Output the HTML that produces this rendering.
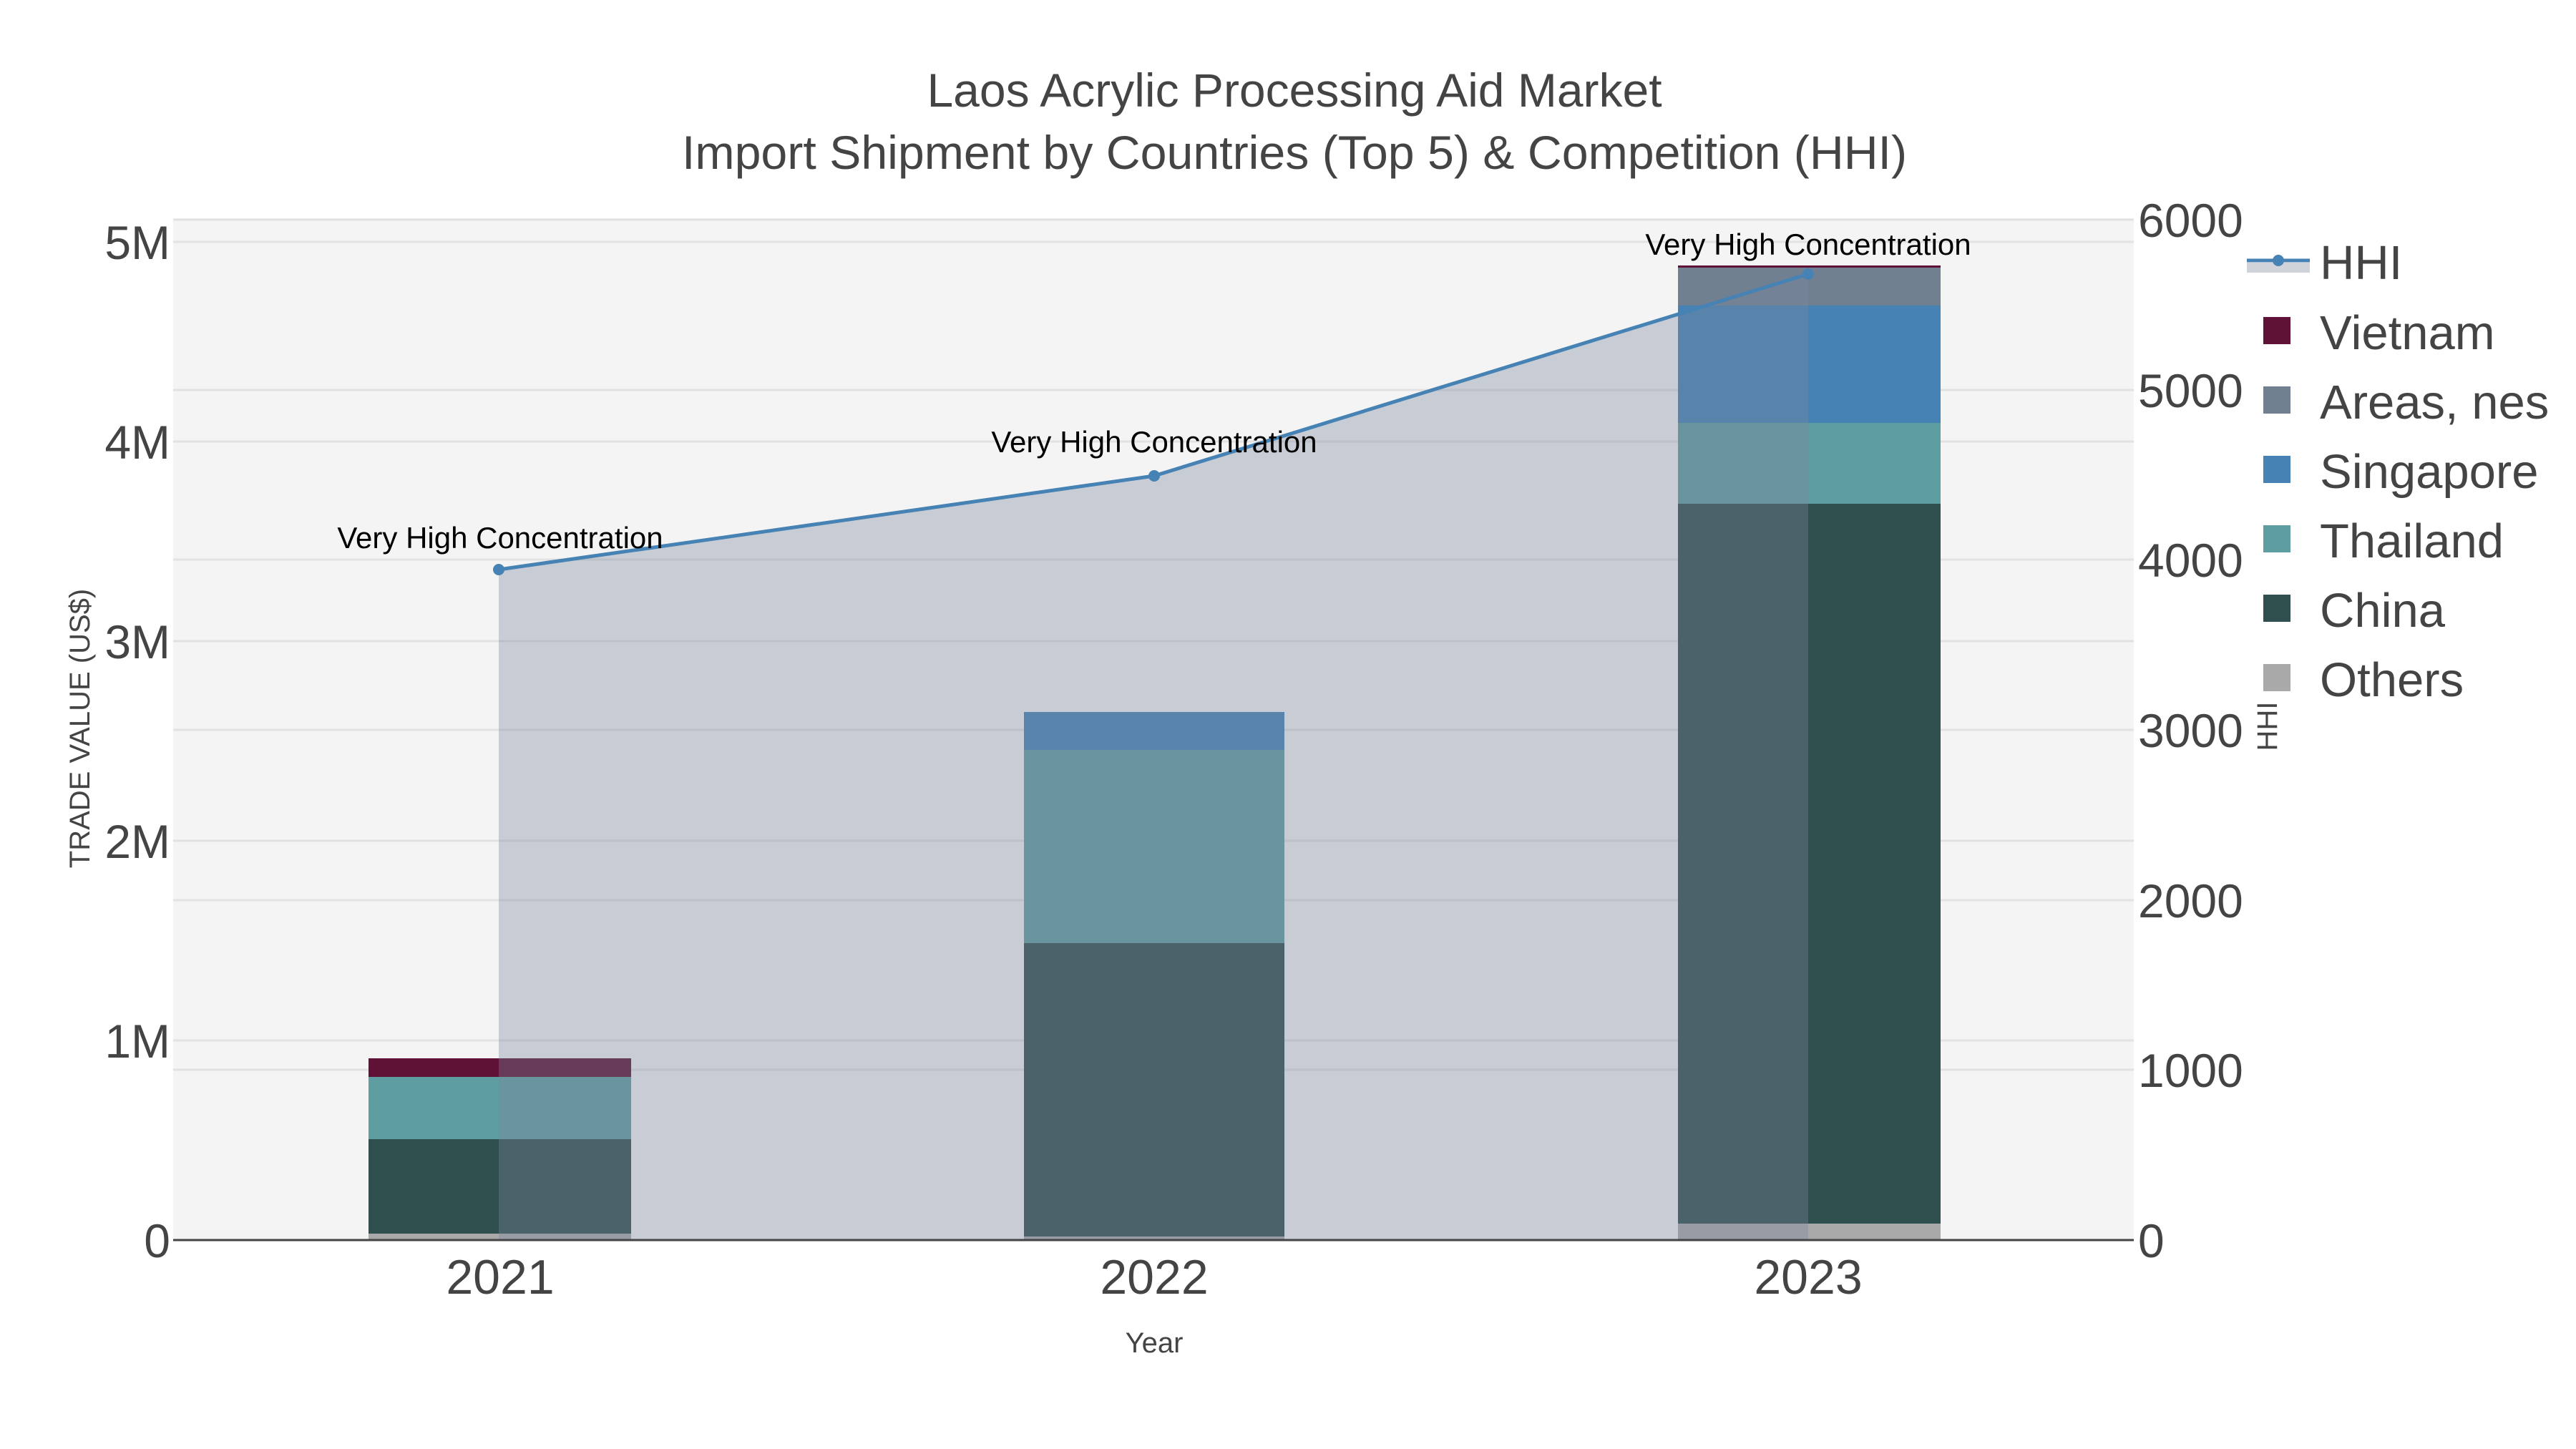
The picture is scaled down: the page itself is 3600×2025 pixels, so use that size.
<!DOCTYPE html>
<html><head><meta charset="utf-8"><style>html,body{margin:0;padding:0;background:#fff}svg{display:block}</style></head>
<body>
<svg width="3600" height="2025" viewBox="0 0 3600 2025" xmlns="http://www.w3.org/2000/svg" font-family="'Liberation Sans', Arial, sans-serif">
<rect width="3600" height="2025" fill="#fff"/>
<rect x="242" y="305" width="2740" height="1428" fill="#f4f4f4"/>
<g stroke="#e2e2e2" stroke-width="3">
<line x1="242" x2="2982" y1="1454" y2="1454"/><line x1="242" x2="2982" y1="1175" y2="1175"/><line x1="242" x2="2982" y1="896" y2="896"/><line x1="242" x2="2982" y1="617" y2="617"/><line x1="242" x2="2982" y1="338" y2="338"/>
<line x1="242" x2="2982" y1="1495" y2="1495"/><line x1="242" x2="2982" y1="1258" y2="1258"/><line x1="242" x2="2982" y1="1020" y2="1020"/><line x1="242" x2="2982" y1="782" y2="782"/><line x1="242" x2="2982" y1="545" y2="545"/><line x1="242" x2="2982" y1="307" y2="307"/>
</g>
<rect x="515" y="1479" width="367" height="26" fill="#5f1235"/>
<rect x="515" y="1505" width="367" height="87" fill="#5f9ea0"/>
<rect x="515" y="1592" width="367" height="132" fill="#2f4f4f"/>
<rect x="515" y="1724" width="367" height="9" fill="#a9a9a9"/>
<rect x="1431" y="995" width="364" height="53" fill="#4682b4"/>
<rect x="1431" y="1048" width="364" height="270" fill="#5f9ea0"/>
<rect x="1431" y="1318" width="364" height="410" fill="#2f4f4f"/>
<rect x="1431" y="1728" width="364" height="5" fill="#a9a9a9"/>
<rect x="2345" y="371" width="367" height="3" fill="#5f1235"/>
<rect x="2345" y="374" width="367" height="53" fill="#708090"/>
<rect x="2345" y="427" width="367" height="164" fill="#4682b4"/>
<rect x="2345" y="591" width="367" height="113" fill="#5f9ea0"/>
<rect x="2345" y="704" width="367" height="1006" fill="#2f4f4f"/>
<rect x="2345" y="1710" width="367" height="23" fill="#a9a9a9"/>
<polygon points="697,796 1613,665 2527,383 2527,1733 697,1733" fill="rgba(122,133,155,0.36)"/>
<polyline points="697,796 1613,665 2527,383" fill="none" stroke="#4682b4" stroke-width="5"/>
<circle cx="697" cy="796" r="8" fill="#4682b4"/><circle cx="1613" cy="665" r="8" fill="#4682b4"/><circle cx="2527" cy="383" r="8" fill="#4682b4"/>
<line x1="242" x2="2982" y1="1733" y2="1733" stroke="#444" stroke-width="3"/>
<g font-size="42" fill="#000" text-anchor="middle">
<text x="699" y="766">Very High Concentration</text>
<text x="1613" y="632">Very High Concentration</text>
<text x="2527" y="356">Very High Concentration</text>
</g>
<g font-size="66" fill="#444" text-anchor="middle">
<text x="1809" y="149">Laos Acrylic Processing Aid Market</text>
<text x="1809" y="236" textLength="1712" lengthAdjust="spacingAndGlyphs">Import Shipment by Countries (Top 5) &amp; Competition (HHI)</text>
</g>
<g font-size="66" fill="#444" text-anchor="end">
<text x="238" y="1757">0</text><text x="238" y="1478">1M</text><text x="238" y="1199">2M</text><text x="238" y="920">3M</text><text x="238" y="641">4M</text><text x="238" y="362">5M</text>
</g>
<svg x="2982" y="280" width="156" height="1500" overflow="hidden">
<g font-size="66" fill="#444" transform="translate(-2982,-280)">
<text x="2988" y="1757">0</text><text x="2988" y="1519">1000</text><text x="2988" y="1282">2000</text><text x="2988" y="1044">3000</text><text x="2988" y="806">4000</text><text x="2988" y="569">5000</text><text x="2988" y="331">6000</text>
</g></svg>
<g font-size="68" fill="#444" text-anchor="middle">
<text x="699" y="1808">2021</text><text x="1613" y="1808">2022</text><text x="2527" y="1808">2023</text>
</g>
<text x="1613" y="1890" font-size="40" fill="#444" text-anchor="middle">Year</text>
<text transform="translate(125,1018) rotate(-90)" font-size="40" fill="#444" text-anchor="middle">TRADE VALUE (US$)</text>
<text transform="translate(3182,1015) rotate(-90)" font-size="40" fill="#444" text-anchor="middle">HHI</text>
<rect x="3140" y="367" width="88" height="14" fill="#d0d4da"/>
<line x1="3140" x2="3228" y1="364" y2="364" stroke="#4682b4" stroke-width="5"/>
<circle cx="3184" cy="364" r="8" fill="#4682b4"/>
<rect x="3163" y="443" width="38" height="38" fill="#5f1235"/>
<rect x="3163" y="540" width="38" height="38" fill="#708090"/>
<rect x="3163" y="637" width="38" height="38" fill="#4682b4"/>
<rect x="3163" y="734" width="38" height="38" fill="#5f9ea0"/>
<rect x="3163" y="831" width="38" height="38" fill="#2f4f4f"/>
<rect x="3163" y="928" width="38" height="38" fill="#a9a9a9"/>
<g font-size="67" fill="#444">
<text x="3242" y="390">HHI</text>
<text x="3242" y="488">Vietnam</text>
<text x="3242" y="585">Areas, nes</text>
<text x="3242" y="682">Singapore</text>
<text x="3242" y="779">Thailand</text>
<text x="3242" y="876">China</text>
<text x="3242" y="973">Others</text>
</g>
</svg>
</body></html>
